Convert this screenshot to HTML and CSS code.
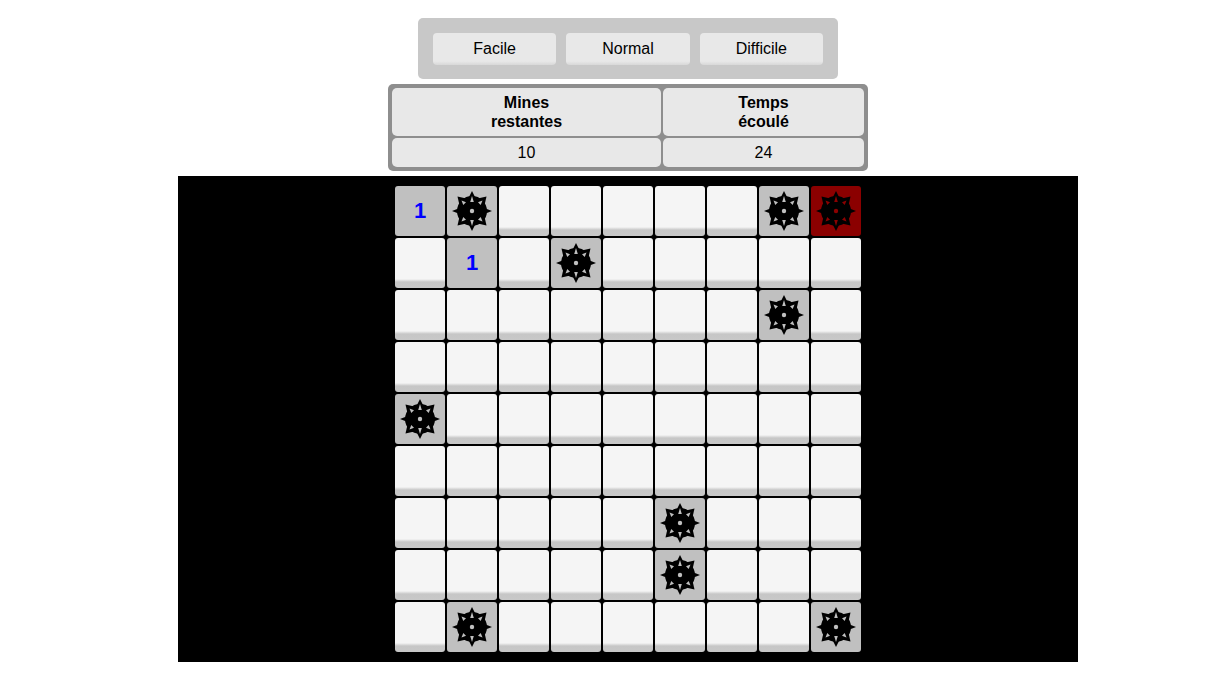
FILE: index.html
```html
<!DOCTYPE html>
<html lang="fr">

<head>
  <meta charset="utf-8" />
  <title>Démineur</title>
  <link rel="stylesheet" href="styles.css">
</head>

<body>
  <svg class="defs" width="0" height="0">
    <symbol id="mine" viewBox="0 0 44 44">
      <g fill="#000">
        <circle cx="22" cy="22" r="15" />
        <path d="M22 2l5.500 11h-11z" />
        <path d="M22 42l5.500-11h-11z" />
        <path d="M2 22l9-3.500v7z" />
        <path d="M42 22l-9-3.500v7z" />
        <path d="M7.500 7.500l11 2.500-8.500 8.500z" />
        <path d="M36.500 7.500l-11 2.500 8.500 8.500z" />
        <path d="M7.500 36.500l11-2.500-8.500-8.500z" />
        <path d="M36.500 36.500l-11-2.500 8.500-8.500z" />
      </g>
      <g class="mine-light">
        <circle cx="22" cy="22" r="2.200" />
        <path d="M22 7l1.800 6h-3.600z" />
        <path d="M22 37l1.800-6h-3.600z" />
        <path d="M11.500 11.500l4.500 1.800-2.700 2.700z" />
        <path d="M32.500 11.500l-4.500 1.800 2.700 2.700z" />
        <path d="M11.500 32.500l4.500-1.800-2.700-2.700z" />
        <path d="M32.500 32.500l-4.500-1.800 2.700-2.700z" />
      </g>
    </symbol>
  </svg>

  <div class="wrapper">
    <div class="levels">
      <button class="level">Facile</button>
      <button class="level">Normal</button>
      <button class="level">Difficile</button>
    </div>

    <div class="scores">
      <div class="score head">Mines<br />restantes</div>
      <div class="score head">Temps<br />écoulé</div>
      <div class="score">10</div>
      <div class="score">24</div>
    </div>

    <div class="board">
      <div class="grid">
        <!-- row 1 -->
        <div class="cell open num">1</div>
        <div class="cell open"><svg class="mine"><use href="#mine" /></svg></div>
        <div class="cell"></div>
        <div class="cell"></div>
        <div class="cell"></div>
        <div class="cell"></div>
        <div class="cell"></div>
        <div class="cell open"><svg class="mine"><use href="#mine" /></svg></div>
        <div class="cell open hit"><svg class="mine"><use href="#mine" /></svg></div>
        <!-- row 2 -->
        <div class="cell"></div>
        <div class="cell open num">1</div>
        <div class="cell"></div>
        <div class="cell open"><svg class="mine"><use href="#mine" /></svg></div>
        <div class="cell"></div>
        <div class="cell"></div>
        <div class="cell"></div>
        <div class="cell"></div>
        <div class="cell"></div>
        <!-- row 3 -->
        <div class="cell"></div>
        <div class="cell"></div>
        <div class="cell"></div>
        <div class="cell"></div>
        <div class="cell"></div>
        <div class="cell"></div>
        <div class="cell"></div>
        <div class="cell open"><svg class="mine"><use href="#mine" /></svg></div>
        <div class="cell"></div>
        <!-- row 4 -->
        <div class="cell"></div>
        <div class="cell"></div>
        <div class="cell"></div>
        <div class="cell"></div>
        <div class="cell"></div>
        <div class="cell"></div>
        <div class="cell"></div>
        <div class="cell"></div>
        <div class="cell"></div>
        <!-- row 5 -->
        <div class="cell open"><svg class="mine"><use href="#mine" /></svg></div>
        <div class="cell"></div>
        <div class="cell"></div>
        <div class="cell"></div>
        <div class="cell"></div>
        <div class="cell"></div>
        <div class="cell"></div>
        <div class="cell"></div>
        <div class="cell"></div>
        <!-- row 6 -->
        <div class="cell"></div>
        <div class="cell"></div>
        <div class="cell"></div>
        <div class="cell"></div>
        <div class="cell"></div>
        <div class="cell"></div>
        <div class="cell"></div>
        <div class="cell"></div>
        <div class="cell"></div>
        <!-- row 7 -->
        <div class="cell"></div>
        <div class="cell"></div>
        <div class="cell"></div>
        <div class="cell"></div>
        <div class="cell"></div>
        <div class="cell open"><svg class="mine"><use href="#mine" /></svg></div>
        <div class="cell"></div>
        <div class="cell"></div>
        <div class="cell"></div>
        <!-- row 8 -->
        <div class="cell"></div>
        <div class="cell"></div>
        <div class="cell"></div>
        <div class="cell"></div>
        <div class="cell"></div>
        <div class="cell open"><svg class="mine"><use href="#mine" /></svg></div>
        <div class="cell"></div>
        <div class="cell"></div>
        <div class="cell"></div>
        <!-- row 9 -->
        <div class="cell"></div>
        <div class="cell open"><svg class="mine"><use href="#mine" /></svg></div>
        <div class="cell"></div>
        <div class="cell"></div>
        <div class="cell"></div>
        <div class="cell"></div>
        <div class="cell"></div>
        <div class="cell"></div>
        <div class="cell open"><svg class="mine"><use href="#mine" /></svg></div>
      </div>
    </div>
  </div>
</body>

</html>
```

FILE: styles.css
```css
* {
  box-sizing: border-box;
  padding: 0;
  margin: 0;
  font-family: "Liberation Sans", Arial, sans-serif;
}

body {
  background-color: #fff;
}

.defs {
  display: block;
}

.wrapper {
  display: flex;
  flex-direction: column;
  align-items: center;
  padding: 18px 0 0 39px;
}

/* Level buttons */
.levels {
  width: 420px;
  height: 61px;
  display: flex;
  gap: 10px;
  padding: 15px 15px 14px;
  background-color: #c8c8c8;
  border-radius: 5px;
}

.level {
  flex: 1;
  height: 32px;
  border: none;
  border-radius: 4px;
  font-size: 16px;
  color: #000;
  background: linear-gradient(to bottom, #e8e8e8 88%, #d8d8d8);
  cursor: pointer;
}

/* Mines left and time */
.scores {
  width: 480px;
  margin-top: 5px;
  display: grid;
  grid-template-columns: 269px 201px;
  gap: 2px;
  padding: 4px;
  background-color: #8e8e8e;
  border-radius: 5px;
}

.score {
  height: 29px;
  display: flex;
  align-items: center;
  justify-content: center;
  text-align: center;
  font-size: 16px;
  line-height: 19px;
  color: #000;
  background-color: #e8e8e8;
  border-radius: 5px;
}

.head {
  height: 48px;
  font-weight: bold;
}

/* Board */
.board {
  width: 900px;
  margin-top: 5px;
  padding: 10px 0;
  display: flex;
  justify-content: center;
  background-color: #000;
}

.grid {
  display: grid;
  grid-template-columns: repeat(9, 50px);
  grid-auto-rows: 50px;
  gap: 2px;
}

.cell {
  display: flex;
  align-items: center;
  justify-content: center;
  border-radius: 3px;
  background: linear-gradient(to bottom, #f5f5f5 82%, #c6c6c6 88%, #c8c8c8);
}

.open {
  background: #c0c0c0;
  color: #c0c0c0;
}

.num {
  font-size: 22px;
  font-weight: bold;
  color: #0000ff;
}

.hit {
  background: #8b0000;
  color: #8b0000;
}

.mine {
  width: 44px;
  height: 44px;
}

.mine-light {
  fill: currentColor;
}
```
